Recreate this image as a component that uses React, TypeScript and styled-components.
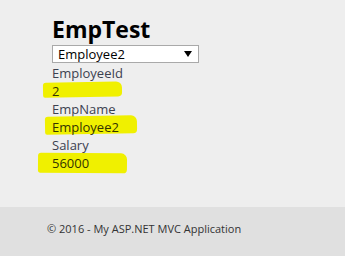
import React from "react";
import styled, { createGlobalStyle } from "styled-components";

const Global = createGlobalStyle`
  html, body { margin: 0; padding: 0; background: #eeeeee; }
  body { font-family: "Open Sans", "Noto Sans", sans-serif; }
`;

const Page = styled.div`
  display: flex;
  flex-direction: column;
  min-height: 256px;
`;

const Main = styled.main`
  flex: 1;
  padding: 0 0 0 52px;
`;

const Title = styled.h1`
  margin: 0;
  padding-top: 15px;
  font-size: 23px;
  line-height: 28px;
  font-weight: 700;
  color: #000;
`;

const SelectWrap = styled.div`
  display: grid;
  width: 147px;
  margin-top: 2px;
  & > * { grid-area: 1 / 1; }
`;

const Select = styled.select`
  appearance: none;
  -webkit-appearance: none;
  box-sizing: border-box;
  width: 147px;
  height: 18px;
  margin: 0;
  padding: 0 0 0 5px;
  border: 1px solid #a9a9a9;
  border-radius: 0;
  background: #fff;
  color: #000;
  font-family: inherit;
  font-size: 13px;
  line-height: 16px;
`;

const Arrow = styled.svg`
  justify-self: end;
  align-self: center;
  margin-right: 7px;
  pointer-events: none;
`;

const Fields = styled.dl`
  margin: 1px 0 0;
  font-size: 13px;
  line-height: 18px;
`;

const Label = styled.dt`
  color: #3c4150;
`;

const Value = styled.dd<{ $l: number; $t: number; $w: number; $h: number; $r: number }>`
  margin: 0;
  position: relative;
  color: #333300;
  z-index: 0;
  &::before {
    content: "";
    position: absolute;
    left: ${(p) => p.$l}px;
    top: ${(p) => p.$t}px;
    width: ${(p) => p.$w}px;
    height: ${(p) => p.$h}px;
    background: #f0f000;
    border-radius: 3px 6px 4px 2px;
    transform: rotate(${(p) => p.$r}deg);
    z-index: -1;
  }
`;

const Footer = styled.footer`
  height: 49px;
  background: #e0e0e0;
  padding-left: 47px;
  box-sizing: border-box;
  font-size: 11px;
  line-height: 16px;
  padding-top: 14px;
  color: #333;
`;

export default function App() {
  return (
    <>
      <Global />
      <Page>
        <Main>
          <Title>EmpTest</Title>
          <SelectWrap>
            <Select defaultValue="2">
              <option value="1">Employee1</option>
              <option value="2">Employee2</option>
            </Select>
            <Arrow width="8" height="6" viewBox="0 0 8 6">
              <path d="M0 0h8L4 6z" fill="#000" />
            </Arrow>
          </SelectWrap>
          <Fields>
            <Label>EmployeeId</Label>
            <Value $l={-9} $t={0} $w={79} $h={15} $r={-1}>2</Value>
            <Label>EmpName</Label>
            <Value $l={-7} $t={-2} $w={92} $h={18} $r={-1}>Employee2</Value>
            <Label>Salary</Label>
            <Value $l={-14} $t={-1} $w={89} $h={20} $r={0.5}>56000</Value>
          </Fields>
        </Main>
        <Footer>© 2016 - My ASP.NET MVC Application</Footer>
      </Page>
    </>
  );
}
